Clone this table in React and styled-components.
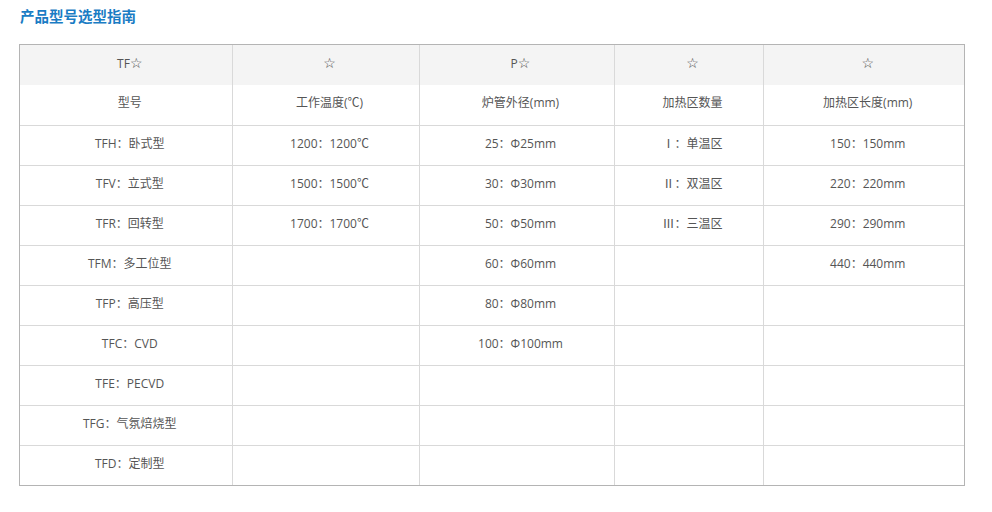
import styled, { createGlobalStyle } from "styled-components";

const GlobalStyle = createGlobalStyle`
  html, body {
    margin: 0;
    padding: 0;
    background: #ffffff;
  }
  body {
    font-family: "Liberation Sans", Arial, "Noto Sans CJK SC", sans-serif;
  }
`;

// widths inside the 1px frame, summing to 944
const columns = [212, 187, 195, 149, 201];

const header = ["TF", "", "P", "", ""];

const rows = [
  ["型号", "工作温度(℃)", "炉管外径(mm)", "加热区数量", "加热区长度(mm)"],
  ["TFH：卧式型", "1200：1200℃", "25：Φ25mm", "Ⅰ：单温区", "150：150mm"],
  ["TFV：立式型", "1500：1500℃", "30：Φ30mm", "Ⅱ：双温区", "220：220mm"],
  ["TFR：回转型", "1700：1700℃", "50：Φ50mm", "Ⅲ：三温区", "290：290mm"],
  ["TFM：多工位型", "", "60：Φ60mm", "", "440：440mm"],
  ["TFP：高压型", "", "80：Φ80mm", "", ""],
  ["TFC：CVD", "", "100：Φ100mm", "", ""],
  ["TFE：PECVD", "", "", "", ""],
  ["TFG：气氛焙烧型", "", "", "", ""],
  ["TFD：定制型", "", "", "", ""],
];

export default function App() {
  return (
    <>
      <GlobalStyle />
      <Page>
        <Title>产品型号选型指南</Title>
        <TableFrame>
          <Table>
            <colgroup>
              {columns.map((w, i) => (
                <col key={i} style={{ width: w }} />
              ))}
            </colgroup>
            <thead>
              <tr>
                {header.map((h, i) => (
                  <HeadCell key={i}>
                    {h}
                    <Star>☆</Star>
                  </HeadCell>
                ))}
              </tr>
            </thead>
            <tbody>
              {rows.map((row, r) => (
                <tr key={r}>
                  {row.map((cell, c) => (
                    <Cell key={c}>{cell}</Cell>
                  ))}
                </tr>
              ))}
            </tbody>
          </Table>
        </TableFrame>
      </Page>
    </>
  );
}

const Page = styled.div`
  width: 946px;
  padding: 6px 0 0 19px;
`;

const Title = styled.h2`
  margin: 0 0 18px 1px;
  font-size: 14.5px;
  line-height: 20px;
  font-weight: bold;
  color: #1a7cc4;
  font-family: "Noto Sans CJK SC", sans-serif;
`;

const TableFrame = styled.div`
  border: 1px solid #b4b4b4;
`;

const Table = styled.table`
  width: 944px;
  border-collapse: collapse;
  table-layout: fixed;

  th,
  td {
    height: 40px;
    padding: 0 0 3px 8px;
    border: 1px solid #d9d9d9;
    text-align: center;
    vertical-align: middle;
    font-family: "Open Sans", "Noto Sans CJK SC", sans-serif;
    font-size: 12px;
    line-height: 16px;
    color: #555555;
    box-sizing: border-box;
  }
  tr:first-child > * {
    border-top: none;
  }
  tr:last-child > * {
    border-bottom: none;
  }
  tr > *:first-child {
    border-left: none;
  }
  tr > *:last-child {
    border-right: none;
  }
`;

const HeadCell = styled.th`
  background: #f4f4f4;
  font-weight: normal;
`;

const Star = styled.span`
  font-family: "DejaVu Sans", sans-serif;
  font-size: 14px;
  color: #444444;
`;

const Cell = styled.td`
  background: #ffffff;
`;
